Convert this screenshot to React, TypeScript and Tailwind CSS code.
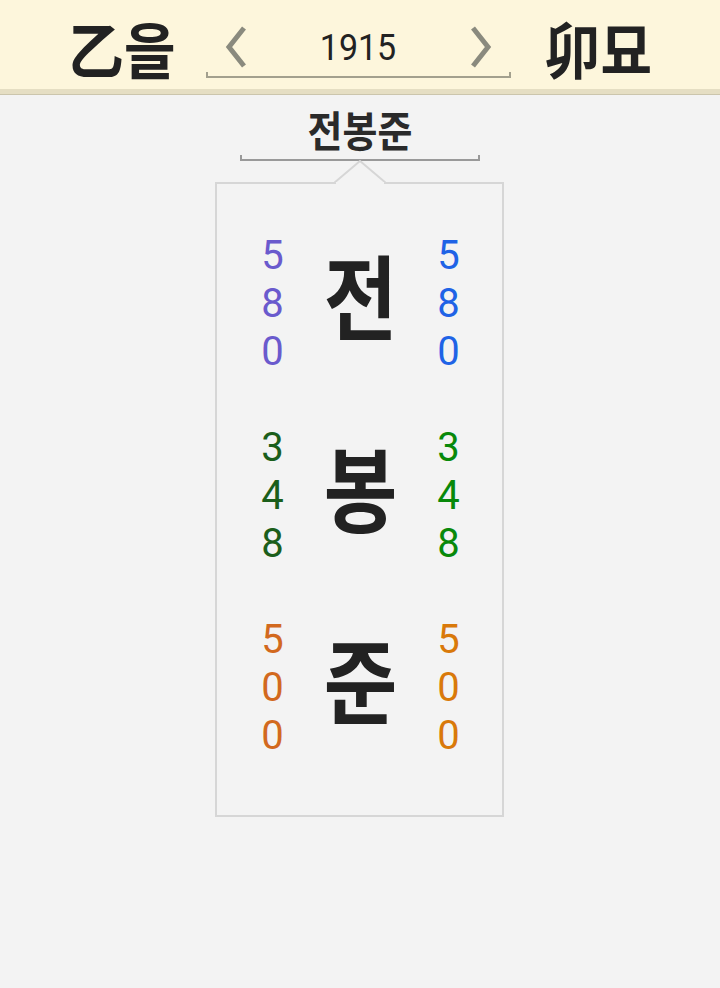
import React from "react";

const KR = "font-['Noto_Sans_CJK_KR',_'Noto_Sans',_sans-serif]";
const NUM = "font-['Roboto',_'Liberation_Sans',_sans-serif]";

type Row = { ch: string; left: string; right: string; num: string };

const rows: Row[] = [
    { ch: "전", left: "text-[#6a5acd]", right: "text-[#1f63e6]", num: "580" },
    { ch: "봉", left: "text-[#1b5e1b]", right: "text-[#08890a]", num: "348" },
    { ch: "준", left: "text-[#d2691e]", right: "text-[#d9790a]", num: "500" },
];

function Chevron({ dir }: { dir: "left" | "right" }) {
    return (
        <svg width="26" height="44" viewBox="0 0 26 44" className="shrink-0">
            <path
                d={dir === "left" ? "M21 3 L6 22 L21 41" : "M5 3 L20 22 L5 41"}
                fill="none"
                stroke="#8a8a7e"
                strokeWidth="5"
            />
        </svg>
    );
}

function Digits({ num, color }: { num: string; color: string }) {
    return (
        <div className={`${NUM} flex flex-col items-center w-[40px] ${color}`}>
            {num.split("").map((d, i) => (
                <span key={i} className="text-[40px] leading-[48px] font-normal">
                    {d}
                </span>
            ))}
        </div>
    );
}

function YearNav() {
    return (
        <div className="relative w-[305px] h-[89px] flex items-center justify-between px-[17px] pt-[4px]">
            <Chevron dir="left" />
            <span className={`${NUM} text-[34px] text-[#222] leading-none scale-y-110`}>1915</span>
            <Chevron dir="right" />
            <div className="absolute left-0 right-0 bottom-[11px] h-[6px] border-b-2 border-l-2 border-r-2 border-[#a3a08e]" />
        </div>
    );
}

export default function App() {
    return (
        <div className={`${KR} min-h-[988px] bg-[#f3f3f3] flex flex-col`}>
            <div className="w-full">
                <div className="h-[89px] bg-[#fdf6dc] flex items-center justify-center">
                    <div className="text-[56px] font-bold text-[#222] leading-none mr-[30px] scale-y-110 pt-[4px]">乙을</div>
                    <YearNav />
                    <div className="text-[56px] font-bold text-[#222] leading-none ml-[34px] scale-y-110 pt-[4px]">卯묘</div>
                </div>
                <div className="h-[5px] bg-[#e5dec3]" />
                <div className="h-px bg-[#cbc5ac]" />
            </div>

            <div className="flex flex-col items-center">
                <div className="mt-[8px] text-[38px] font-bold text-[#2a2a2a] leading-[52px] scale-y-110">전봉준</div>
                <div className="w-[240px] h-[6px] border-b-2 border-l-2 border-r-2 border-[#999]" />

                <div className="relative mt-[21px] -ml-[2px] w-[289px] h-[635px] border-2 border-[#d6d6d6] pt-[48px] flex flex-col gap-[48px]">
                    <svg
                        width="52"
                        height="26"
                        viewBox="0 0 52 26"
                        className="absolute left-[117px] top-[-24px]"
                    >
                        <path d="M0 23 L26 1 L52 23" fill="#f3f3f3" stroke="#d6d6d6" strokeWidth="2" />
                        <rect x="2" y="22" width="48" height="4" fill="#f3f3f3" />
                    </svg>
                    {rows.map((r) => (
                        <div key={r.ch} className="flex items-center pl-[36px]">
                            <Digits num={r.num} color={r.left} />
                            <div className="w-[136px] flex justify-center">
                                <span className="text-[80px] font-bold text-[#222] leading-none scale-y-115 -mt-[22px]">{r.ch}</span>
                            </div>
                            <Digits num={r.num} color={r.right} />
                        </div>
                    ))}
                </div>
            </div>
        </div>
    );
}
